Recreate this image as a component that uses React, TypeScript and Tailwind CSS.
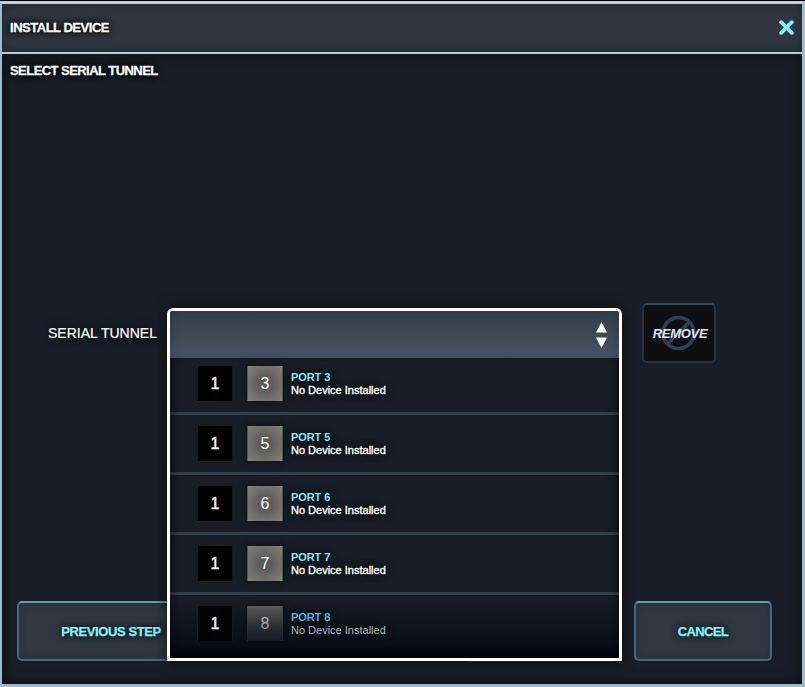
import React from "react";

const ports = [3, 5, 6, 7, 8];

function PortRow({ port }: { port: number }) {
  return (
    <div className="group flex h-[60px] shrink-0 items-center border-b-[3px] border-[#353f4b] pl-[27px] last:border-transparent">
      <div className="flex h-[35px] w-9 items-center justify-center border-x border-[#15191f] bg-black text-base [-webkit-text-stroke:0.4px_white] group-last:relative group-last:z-10 group-last:bg-[#010307]">1</div>
      <div className="ml-[14px] flex h-[35px] w-9 items-center justify-center border-x border-[#55534f] bg-[radial-gradient(circle,#5a5a5a_20%,#85817b_100%)] text-base shadow-[0_0_8px_#0008] group-last:bg-[linear-gradient(#6b6965,#494a4d_55%,#363940)]">{port}</div>
      <div className="ml-2 text-[11px] leading-[13px] [text-shadow:0_0_8px_#000] group-last:relative group-last:z-10">
        <div className="font-bold text-[#84edff] group-last:text-[#56b4e4]"><span className="tracking-[-0.1px]">PORT {port}</span></div>
        <div className="[-webkit-text-stroke:0.35px_white] group-last:text-[#b4b7bd] group-last:[-webkit-text-stroke:0px]">No Device Installed</div>
      </div>
    </div>
  );
}

function SerialSelect() {
  return (
    <div className="relative z-10 h-[353px] w-[455px] overflow-hidden rounded-t-[6px] border-[3px] border-white bg-[#181d26] shadow-[0_0_14px_#000a]">
      <div className="flex h-[47px] items-center justify-end bg-[linear-gradient(#35414c,#404953_55%,#455060_80%,#4a566b)] pr-[12px] shadow-[inset_0_0_12px_#0003]">
        <svg width="11" height="26" viewBox="0 0 12 26" preserveAspectRatio="none" fill="white">
          <path d="M6 0 12 10.5H0ZM0 15.5h12L6 26Z" />
        </svg>
      </div>
      <div className="-mt-[3px] flex flex-col">
        {ports.map((port) => <PortRow key={port} port={port} />)}
      </div>
      <div className="pointer-events-none absolute inset-x-0 top-[47px] bottom-0 shadow-[inset_9px_0_10px_-6px_#0007,inset_-9px_0_10px_-6px_#0007]" />
      <div className="pointer-events-none absolute inset-x-0 bottom-0 h-[63px] bg-[linear-gradient(transparent,#00061050_40%,#000510a0_75%,#00020c)]" />
    </div>
  );
}

function ActionButton({ label, className }: { label: string; className: string }) {
  return (
    <button className={`h-[60px] shrink-0 rounded-[5px] border-2 border-[#4f6480] border-t-[#7397b0] bg-[#303841] pt-px text-[13px] font-bold text-[#84f4ff] shadow-[inset_0_0_8px_#0003] [-webkit-text-stroke:0.25px_#84f4ff] [text-shadow:0_0_9px_#000a,0_0_6px_#000a] ${className}`}>
      {label}
    </button>
  );
}

export default function App() {
  return (
    <div className="h-[687px] w-[805px] overflow-hidden bg-black pt-px font-['Liberation_Sans',Arial,sans-serif] text-white">
      <div className="flex h-[686px] flex-col border-[3px] border-l-2 border-[#a5bac8] border-t-[#bed2e2] bg-[#181e27]">
        <header className="flex h-[50px] shrink-0 items-center justify-between border-b-2 border-[#bacbd8] bg-[#303740] pr-[8px] pl-[8px] shadow-[inset_0_0_12px_#0005]">
          <h1 className="text-[13px] font-bold tracking-[-0.48px] [-webkit-text-stroke:0.3px_white] [text-shadow:0_0_9px_#000,0_0_6px_#000]">INSTALL DEVICE</h1>
          <svg className="mb-px" width="15" height="15" viewBox="0 0 15 15" fill="none" stroke="#82f2ff" strokeWidth="3.8" strokeLinecap="round">
            <path d="m2.2 2.2 10.6 10.6m0-10.6L2.2 12.8" />
          </svg>
        </header>
        <main className="flex min-h-0 flex-1 flex-col shadow-[inset_0_0_14px_#0008]">
          <h2 className="h-[254px] shrink-0 pt-[7px] pl-2 text-[13px] font-bold tracking-[-0.55px] [-webkit-text-stroke:0.3px_white] [text-shadow:0_0_9px_#000,0_0_6px_#000]">SELECT SERIAL TUNNEL</h2>
          <section className="flex h-[293px] shrink-0 items-start pl-[46px]">
            <label className="w-[119px] pt-[15px] text-sm whitespace-nowrap [-webkit-text-stroke:0.2px_white] [text-shadow:0_0_9px_#000]">SERIAL TUNNEL</label>
            <SerialSelect />
            <button className="relative -mt-[5px] ml-5 flex h-[60px] w-[74px] items-center justify-center rounded-[5px] border-2 border-[#29313f] border-t-[#3a4b58] bg-[#0d0f12]">
              <svg className="absolute" width="36" height="36" viewBox="0 0 36 36" fill="none" stroke="#343e58" strokeWidth="3.7">
                <circle cx="17.5" cy="18" r="15.5" /><path d="M28.5 7 6.5 29" />
              </svg>
              <span className="relative pt-px pl-[2px] text-[13px] font-bold tracking-[-0.3px] text-[#e0e3f5] italic">REMOVE</span>
            </button>
          </section>
          <footer className="flex pl-[15px]">
            <ActionButton label="PREVIOUS STEP" className="w-[188px] tracking-[-0.4px]" />
            <div className="ml-[261px] h-[61px] w-[152px] shrink-0 rounded-[5px] border-b border-[#303944]" />
            <ActionButton label="CANCEL" className="ml-4 w-[138px] tracking-[-0.65px]" />
          </footer>
        </main>
      </div>
    </div>
  );
}
